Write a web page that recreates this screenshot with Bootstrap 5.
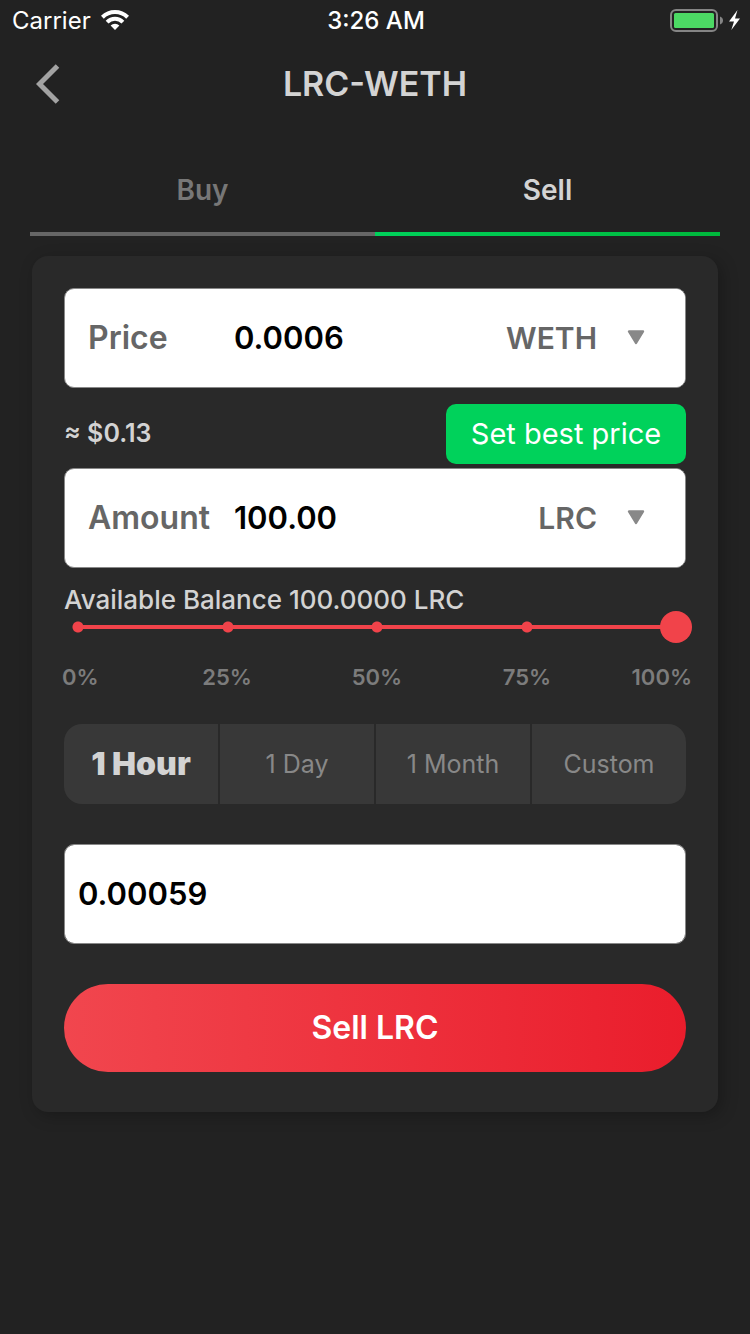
<!DOCTYPE html>
<html lang="en">
<head>
<meta charset="utf-8">
<meta name="viewport" content="width=device-width, initial-scale=1">
<title>LRC-WETH</title>
<link href="https://cdn.jsdelivr.net/npm/bootstrap@5.3.0/dist/css/bootstrap.min.css" rel="stylesheet">
<style>
  body { background: #222; color: #d3d3d3; font-family: Inter, "Liberation Sans", sans-serif; }
  .status-bar { height: 40px; padding: 0 10px 0 12px; font-size: 24px; line-height: 38px; color: #fff; }
  .status-bar span, .status-bar time { padding-top: 2px; }
  .title-bar { height: 88px; padding: 0 36px; }
  .title-bar h1 { font-size: 34px; line-height: 40px; font-weight: 600; }
  .side-col { flex: 1 1 0; }
  .back-link { line-height: 0; }

  .trade-tabs { margin: 24px 30px 0; }
  .trade-tabs .nav-link { height: 84px; padding: 0 0 4px; border: 0; border-bottom: 4px solid #666; border-radius: 0;
    background: none; color: #777; font-size: 28px; line-height: 68px; font-weight: 600; }
  .trade-tabs .nav-link.active { border-image: linear-gradient(90deg, #00d25b, #00b83c) 1; background: none; color: #d3d3d3; }

  .order-card { margin: 20px 32px; padding: 32px; border-radius: 16px; background: #292929; box-shadow: 4px 4px 16px rgba(0, 0, 0, .25); }
  .field-box { height: 100px; border: 1px solid #888; border-radius: 10px; background: #fff; overflow: hidden; }
  .field-box label { width: 169px; padding-left: 23px; color: #666; font-size: 32px; font-weight: 600; }
  .field-box input { min-width: 0; height: 98px; padding: 0 0 2px; border: 0; border-radius: 0; background: #fff;
    color: #000; font-size: 31px; font-weight: 600; }
  .field-box select { width: 220px; height: 98px; padding: 0 88px 0 0; border: 0; border-radius: 0; color: #666;
    font-size: 30px; font-weight: 600; text-align-last: right;
    background: #fff url("data:image/svg+xml,%3Csvg xmlns='http://www.w3.org/2000/svg' viewBox='0 0 18 16'%3E%3Cpath d='M2 1.500h14L9 13z' fill='%23888' stroke='%23888' stroke-width='2.400' stroke-linejoin='round'/%3E%3C/svg%3E") no-repeat right 40px center / 18px 16px; }
  .field-box .single-input { padding-left: 13px; }

  .worth-row { height: 80px; padding-top: 12px; font-size: 25px; font-weight: 600; }
  .best-btn { width: 240px; height: 60px; padding: 0; border: 0; border-radius: 10px; background: #00d25b; color: #fff; font-size: 29px; }
  .best-btn:hover { background: #00b84a; color: #fff; }

  .balance-label { padding-top: 14px; font-size: 26px; line-height: 36px; font-weight: 500; }
  .share-slider { margin: 0 -6px 0 -2px; }
  .share-slider input { display: block; width: 100%; height: 32px; margin: -7px 0 0; padding: 0; appearance: none;
    --dot: radial-gradient(circle at center, #f1434a 5px, transparent 6px);
    background:
      var(--dot) 10px center / 12px 12px no-repeat,
      var(--dot) calc(25% + 5px) center / 12px 12px no-repeat,
      var(--dot) center / 12px 12px no-repeat,
      var(--dot) calc(75% - 5px) center / 12px 12px no-repeat,
      linear-gradient(#f1434a, #f1434a) center / calc(100% - 32px) 4px no-repeat; }
  .share-slider input::-webkit-slider-runnable-track { height: 32px; background: none; }
  .share-slider input::-webkit-slider-thumb { width: 32px; height: 32px; appearance: none; border: 0; border-radius: 50%; background: #f1434a; }
  .share-slider input::-moz-range-thumb { width: 32px; height: 32px; border: 0; border-radius: 50%; background: #f1434a; }
  .share-marks { grid-template-columns: 3fr 5fr 5fr 5fr 3fr; padding-top: 18px; color: #7c7c7c; font-size: 22px; line-height: 32px; font-weight: 600; }

  .period-group { margin-top: 31px; gap: 2px; border-radius: 18px; overflow: hidden; }
  .period-group .btn { height: 80px; padding: 0; border: 0; border-radius: 0; background: #383838; color: #888; font-size: 25px; line-height: 80px; }
  .period-group .btn-check:checked + .btn { background: #383838; color: #d3d3d3; font-size: 32px; font-weight: 900; }

  .result-box { margin: 40px 0; }
  .sell-btn { height: 88px; margin-bottom: 8px; border: 0; background: linear-gradient(90deg, #f1464e, #ea1d2c); color: #fff; font-size: 32px; font-weight: 600; }
  .sell-btn:hover { color: #fff; }
</style>
</head>
<body>
<header>
  <div class="status-bar d-flex align-items-center">
    <div class="side-col d-flex align-items-center gap-2">
      <span>Carrier</span>
      <svg width="32" height="21" viewBox="0 0 32 21" fill="none" stroke="#fff" stroke-width="4" aria-label="Wi-Fi">
        <path d="M3.400 7.200a18 18 0 0 1 25.200 0M8.100 12.100a11.200 11.200 0 0 1 15.800 0"/>
        <path d="M11.600 15.500a6.200 6.200 0 0 1 8.800 0L16 20z" fill="#fff" stroke="none"/>
      </svg>
    </div>
    <time class="fw-medium">3:26 AM</time>
    <div class="side-col d-flex align-items-center justify-content-end">
      <svg width="70" height="24" viewBox="0 0 70 24" aria-label="Battery charging">
        <rect x="1" y="2" width="46" height="21" rx="5" fill="none" stroke="#858585" stroke-width="2"/>
        <rect x="4" y="5" width="40" height="15" rx="1.500" fill="#4cd964"/>
        <path d="M50 8.500q3 1.200 3 4t-3 4z" fill="#858585"/>
        <path d="M67.500 2 59 13.500h5L61.300 22 70 10.500h-5z" fill="#fff"/>
      </svg>
    </div>
  </div>
  <div class="title-bar d-flex align-items-center">
    <div class="side-col">
      <a href="#" class="back-link d-inline-block" aria-label="Back">
        <svg width="24" height="40" viewBox="0 0 24 40" fill="none" stroke="#a3a3a3" stroke-width="5"><path d="M21.500 2 3.500 20l18 18"/></svg>
      </a>
    </div>
    <h1 class="m-0">LRC-WETH</h1>
    <div class="side-col"></div>
  </div>
</header>

<nav class="trade-tabs nav nav-pills nav-justified">
  <button type="button" class="nav-link">Buy</button>
  <button type="button" class="nav-link active" aria-current="true">Sell</button>
</nav>

<main>
  <form class="order-card">
    <div class="field-box d-flex align-items-center">
      <label for="price" class="flex-shrink-0">Price</label>
      <input id="price" class="form-control flex-fill" type="text" value="0.0006">
      <select class="form-select flex-shrink-0" aria-label="Price currency"><option>WETH</option></select>
    </div>

    <div class="worth-row d-flex align-items-center justify-content-between">
      <span>≈ $0.13</span>
      <button type="button" class="btn best-btn">Set best price</button>
    </div>

    <div class="field-box d-flex align-items-center">
      <label for="amount" class="flex-shrink-0">Amount</label>
      <input id="amount" class="form-control flex-fill" type="text" value="100.00">
      <select class="form-select flex-shrink-0" aria-label="Amount currency"><option>LRC</option></select>
    </div>

    <label for="share" class="balance-label d-block">Available Balance 100.0000 LRC</label>
    <div class="share-slider">
      <input id="share" type="range" min="0" max="100" step="25" value="100">
      <div class="share-marks d-grid text-center">
        <span class="text-start">0%</span>
        <span>25%</span>
        <span>50%</span>
        <span>75%</span>
        <span class="text-end">100%</span>
      </div>
    </div>

    <div class="period-group row row-cols-4 gx-0 flex-nowrap mx-0" role="group" aria-label="Valid for">
      <div class="col flex-fill"><input class="btn-check" type="radio" name="period" id="hour" checked><label class="btn d-block" for="hour">1 Hour</label></div>
      <div class="col flex-fill"><input class="btn-check" type="radio" name="period" id="day"><label class="btn d-block" for="day">1 Day</label></div>
      <div class="col flex-fill"><input class="btn-check" type="radio" name="period" id="month"><label class="btn d-block" for="month">1 Month</label></div>
      <div class="col flex-fill"><input class="btn-check" type="radio" name="period" id="custom"><label class="btn d-block" for="custom">Custom</label></div>
    </div>

    <div class="field-box result-box">
      <input class="form-control single-input" type="text" value="0.00059" aria-label="Fee">
    </div>

    <button type="button" class="btn sell-btn w-100 rounded-pill">Sell LRC</button>
  </form>
</main>
<script src="https://cdn.jsdelivr.net/npm/bootstrap@5.3.0/dist/js/bootstrap.bundle.min.js"></script>
</body>
</html>
